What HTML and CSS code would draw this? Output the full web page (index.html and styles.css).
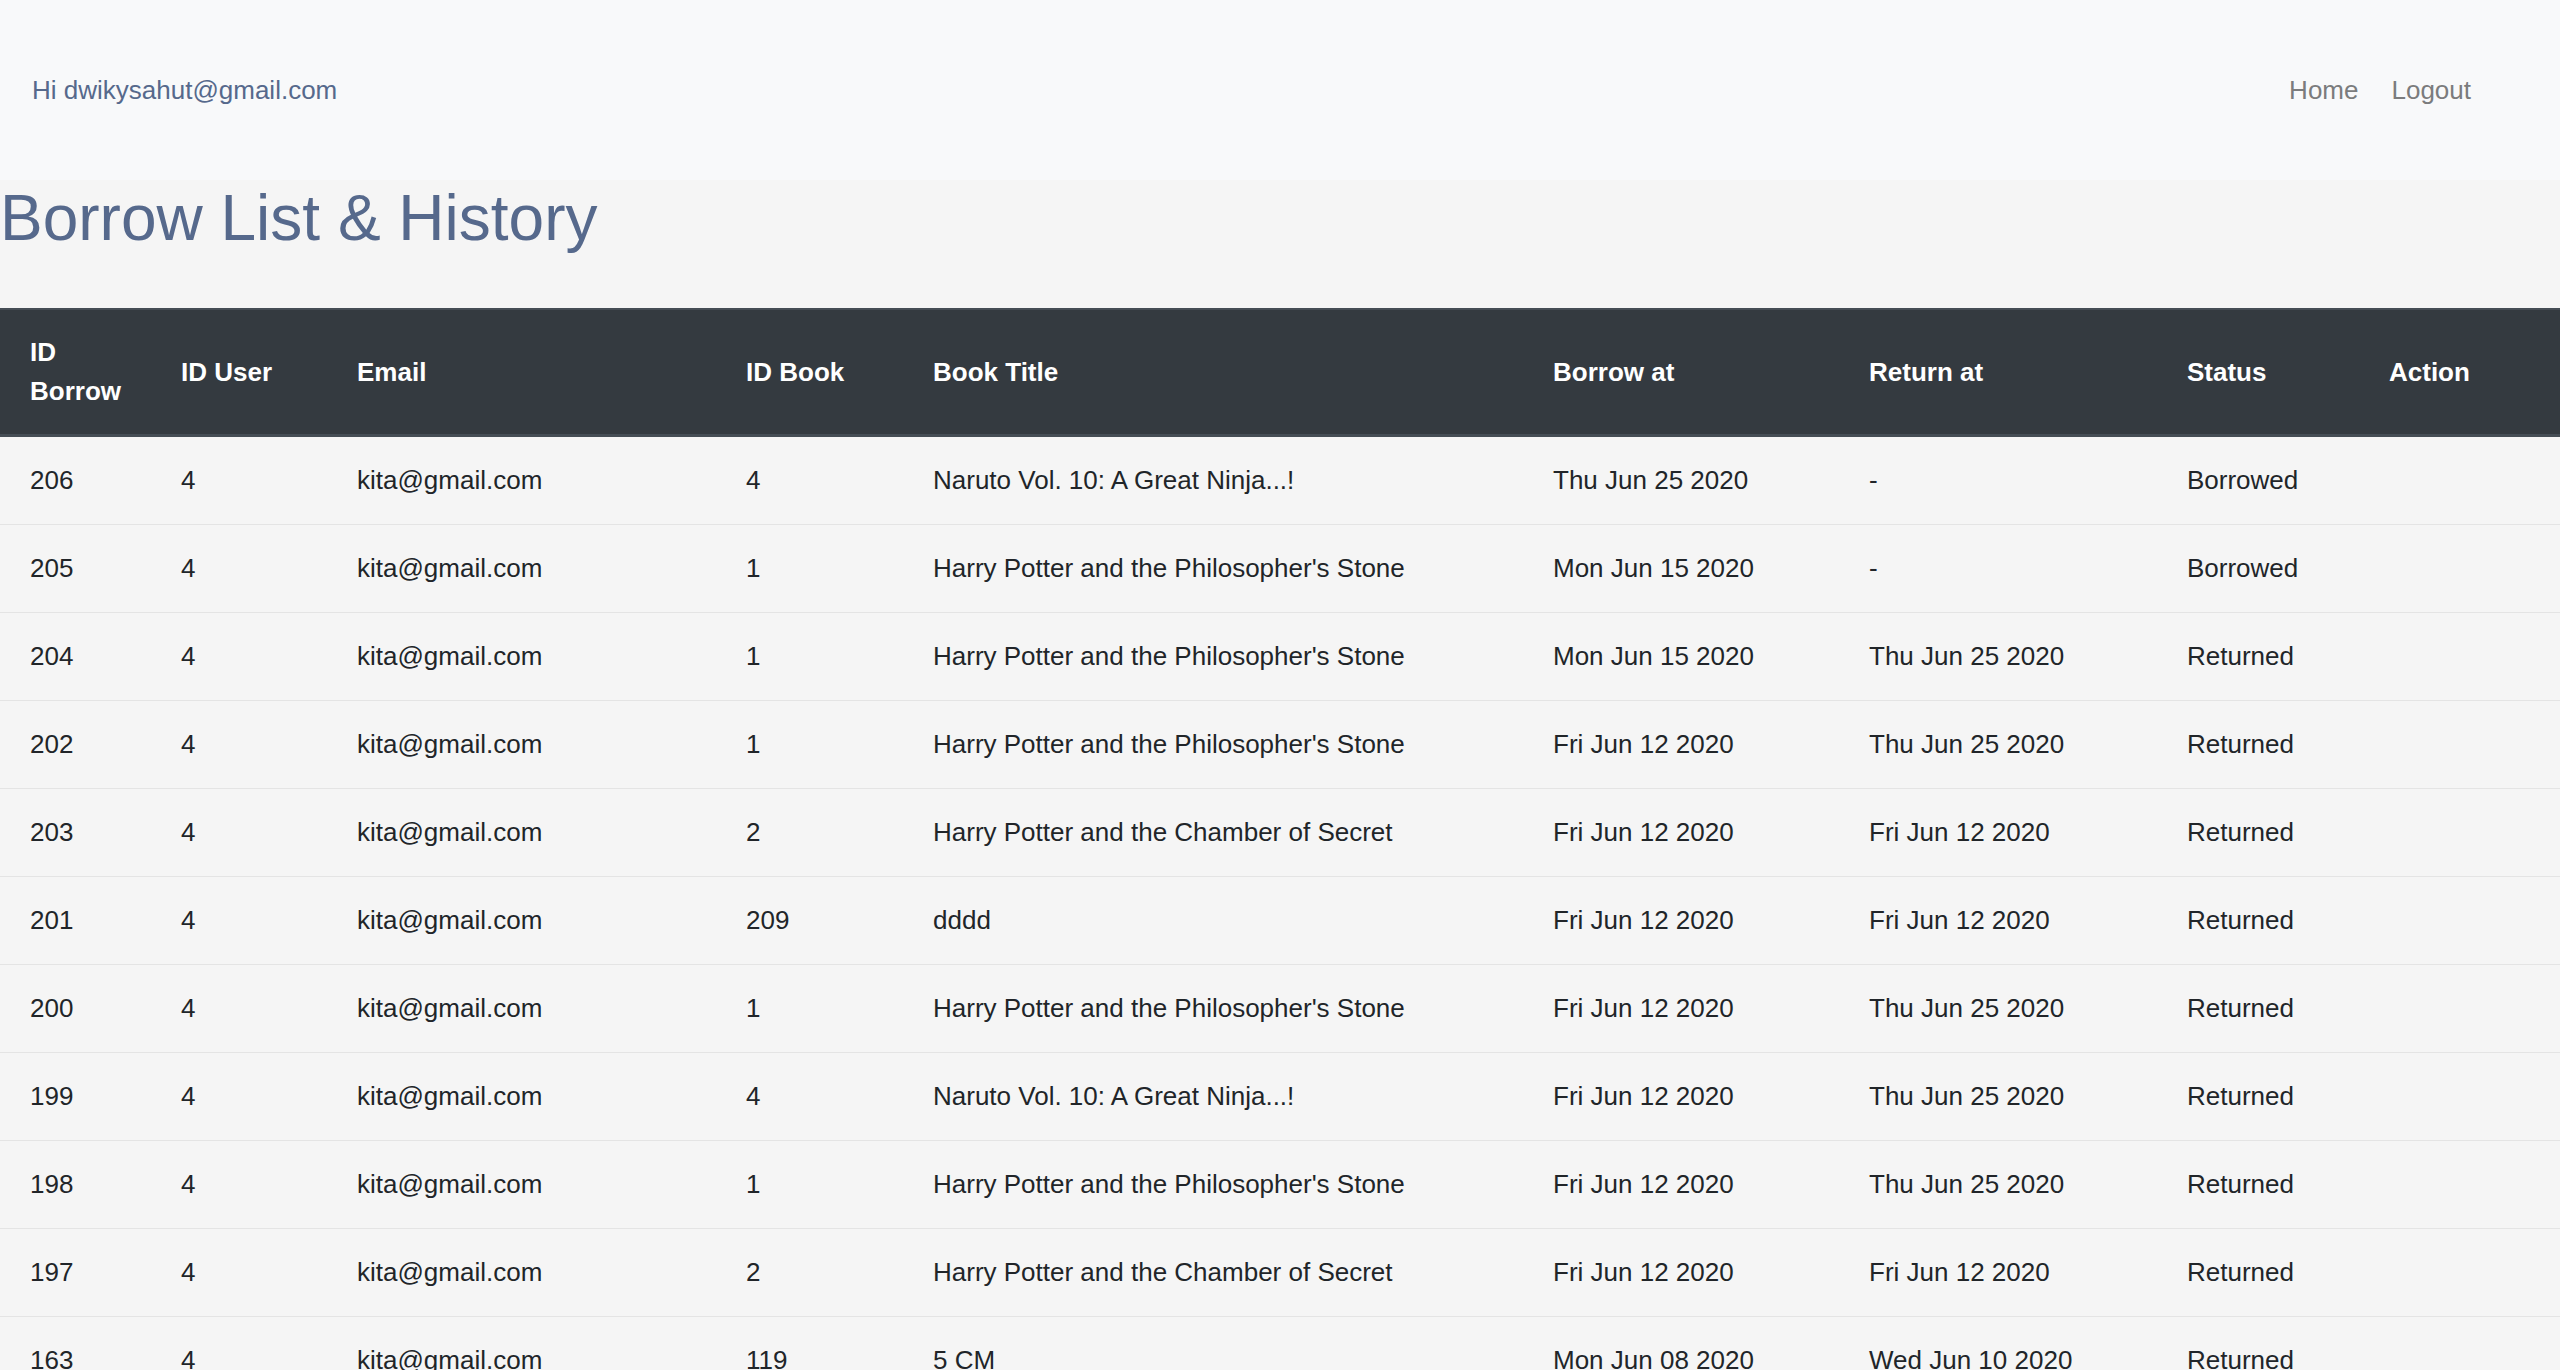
FILE: index.html
```html
<!DOCTYPE html>
<html lang="en">
<head>
<meta charset="utf-8">
<title>Borrow List &amp; History</title>
<link rel="stylesheet" href="styles.css">
</head>
<body>
<nav class="navbar">
  <span class="greeting">Hi dwikysahut@gmail.com</span>
  <div class="nav-links">
    <a class="nav-link" href="#">Home</a>
    <a class="nav-link" href="#">Logout</a>
  </div>
</nav>
<h1 class="page-title">Borrow List &amp; History</h1>
<table class="borrow-table">
  <colgroup>
    <col class="c1"><col class="c2"><col class="c3"><col class="c4"><col class="c5"><col class="c6"><col class="c7"><col class="c8"><col class="c9">
  </colgroup>
  <thead>
    <tr>
      <th>ID Borrow</th>
      <th>ID User</th>
      <th>Email</th>
      <th>ID Book</th>
      <th>Book Title</th>
      <th>Borrow at</th>
      <th>Return at</th>
      <th>Status</th>
      <th>Action</th>
    </tr>
  </thead>
  <tbody>
    <tr><td>206</td><td>4</td><td>kita@gmail.com</td><td>4</td><td>Naruto Vol. 10: A Great Ninja...!</td><td>Thu Jun 25 2020</td><td>-</td><td>Borrowed</td><td></td></tr>
    <tr><td>205</td><td>4</td><td>kita@gmail.com</td><td>1</td><td>Harry Potter and the Philosopher's Stone</td><td>Mon Jun 15 2020</td><td>-</td><td>Borrowed</td><td></td></tr>
    <tr><td>204</td><td>4</td><td>kita@gmail.com</td><td>1</td><td>Harry Potter and the Philosopher's Stone</td><td>Mon Jun 15 2020</td><td>Thu Jun 25 2020</td><td>Returned</td><td></td></tr>
    <tr><td>202</td><td>4</td><td>kita@gmail.com</td><td>1</td><td>Harry Potter and the Philosopher's Stone</td><td>Fri Jun 12 2020</td><td>Thu Jun 25 2020</td><td>Returned</td><td></td></tr>
    <tr><td>203</td><td>4</td><td>kita@gmail.com</td><td>2</td><td>Harry Potter and the Chamber of Secret</td><td>Fri Jun 12 2020</td><td>Fri Jun 12 2020</td><td>Returned</td><td></td></tr>
    <tr><td>201</td><td>4</td><td>kita@gmail.com</td><td>209</td><td>dddd</td><td>Fri Jun 12 2020</td><td>Fri Jun 12 2020</td><td>Returned</td><td></td></tr>
    <tr><td>200</td><td>4</td><td>kita@gmail.com</td><td>1</td><td>Harry Potter and the Philosopher's Stone</td><td>Fri Jun 12 2020</td><td>Thu Jun 25 2020</td><td>Returned</td><td></td></tr>
    <tr><td>199</td><td>4</td><td>kita@gmail.com</td><td>4</td><td>Naruto Vol. 10: A Great Ninja...!</td><td>Fri Jun 12 2020</td><td>Thu Jun 25 2020</td><td>Returned</td><td></td></tr>
    <tr><td>198</td><td>4</td><td>kita@gmail.com</td><td>1</td><td>Harry Potter and the Philosopher's Stone</td><td>Fri Jun 12 2020</td><td>Thu Jun 25 2020</td><td>Returned</td><td></td></tr>
    <tr><td>197</td><td>4</td><td>kita@gmail.com</td><td>2</td><td>Harry Potter and the Chamber of Secret</td><td>Fri Jun 12 2020</td><td>Fri Jun 12 2020</td><td>Returned</td><td></td></tr>
    <tr><td>163</td><td>4</td><td>kita@gmail.com</td><td>119</td><td>5 CM</td><td>Mon Jun 08 2020</td><td>Wed Jun 10 2020</td><td>Returned</td><td></td></tr>
  </tbody>
</table>
</body>
</html>
```
FILE: styles.css
```css
* { box-sizing: border-box; }

html, body {
  margin: 0;
  padding: 0;
}

body {
  background: #f5f5f5;
  font-family: "Liberation Sans", Arial, Helvetica, sans-serif;
  font-size: 26px;
  line-height: 39px;
  color: #212529;
}

.navbar {
  height: 180px;
  background: #f8f9fa;
  display: flex;
  align-items: center;
  justify-content: space-between;
  padding: 1px 89px 0 32px;
}

.greeting {
  color: #56698c;
}

.nav-links {
  display: flex;
  gap: 33px;
}

.nav-link {
  color: #7b7c7d;
  text-decoration: none;
}

.page-title {
  margin: -1px 0 51px 0;
  font-size: 64px;
  line-height: 78px;
  font-weight: 400;
  color: #56698c;
}

.borrow-table {
  width: 100%;
  table-layout: fixed;
  border-collapse: collapse;
}

.c1 { width: 151px; }
.c2 { width: 176px; }
.c3 { width: 389px; }
.c4 { width: 187px; }
.c5 { width: 620px; }
.c6 { width: 316px; }
.c7 { width: 318px; }
.c8 { width: 202px; }
.c9 { width: 201px; }

.borrow-table th {
  background: #343a40;
  color: #ffffff;
  font-weight: 700;
  text-align: left;
  vertical-align: middle;
  padding: 23px 30px;
  border-top: 2px solid #454d55;
  border-bottom: 3px solid #454d55;
}

.borrow-table td {
  padding: 24px 30px;
  border-top: 1px solid #e4e4e4;
  vertical-align: top;
  white-space: nowrap;
}
```
